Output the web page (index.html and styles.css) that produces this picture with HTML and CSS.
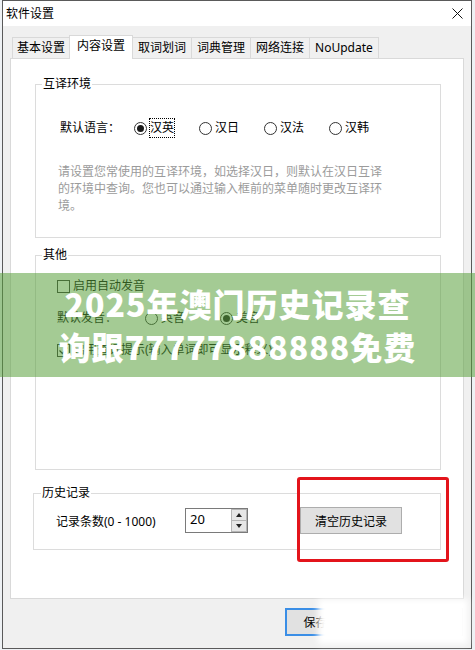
FILE: index.html
```html
<!DOCTYPE html>
<html lang="zh-CN">
  <head>
    <meta charset="UTF-8">
    <meta name="viewport" content="width=device-width, initial-scale=1.0">
    <title>软件设置</title>
    <link rel="stylesheet" href="styles.css">
  </head>
  <body>

    <!-- Dialog window -->
    <div class="window">
      <div class="titlebar">
        <span class="title">软件设置</span>
        <svg class="close" width="11" height="11" viewBox="0 0 11 11">
          <path d="M0.5 0.5 L10.5 10.5 M10.5 0.5 L0.5 10.5" stroke="#111" stroke-width="1" fill="none"/>
        </svg>
      </div>

      <div class="tabs">
        <div class="tab first">基本设置</div>
        <div class="tab active">内容设置</div>
        <div class="tab">取词划词</div>
        <div class="tab">词典管理</div>
        <div class="tab">网络连接</div>
        <div class="tab">NoUpdate</div>
      </div>

      <div class="panel">
        <fieldset class="group group-lang">
          <legend>互译环境</legend>
          <div class="option-row">
            <span class="row-label">默认语言：</span>
            <span class="radio checked"><i></i><span class="focus">汉英</span></span>
            <span class="radio"><i></i><span>汉日</span></span>
            <span class="radio"><i></i><span>汉法</span></span>
            <span class="radio"><i></i><span>汉韩</span></span>
          </div>
          <p class="hint">请设置您常使用的互译环境，如选择汉日，则默认在汉日互译的环境中查询。您也可以通过输入框前的菜单随时更改互译环境。</p>
        </fieldset>

        <fieldset class="group group-other">
          <legend>其他</legend>
          <div class="option-row">
            <span class="checkbox"></span><span>启用自动发音</span>
          </div>
          <div class="option-row">
            <span class="row-label wide">默认发音：</span>
            <span class="radio wide"><i></i><span>英音</span></span>
            <span class="radio wide checked"><i></i><span>美音</span></span>
          </div>
          <div class="option-row">
            <span class="checkbox checked">
              <svg width="11" height="11" viewBox="0 0 11 11"><path d="M1.5 5.5 L4.5 8.5 L9.5 2.5" stroke="#222" stroke-width="1.2" fill="none"/></svg>
            </span><span>启用查词提示(输入单词即可显示释义)</span>
          </div>
        </fieldset>

        <fieldset class="group group-history">
          <legend>历史记录</legend>
          <div class="history-row">
            <span class="history-label">记录条数(0 - 1000)</span>
            <div class="spinner">
              <span class="spin-value">20</span>
              <div class="spin-buttons">
                <span class="spin-up"></span>
                <span class="spin-down"></span>
              </div>
            </div>
            <button class="btn clear-btn">清空历史记录</button>
          </div>
        </fieldset>
      </div>

      <div class="footer">
        <button class="btn default">保存(S)</button>
        <button class="btn">取消(C)</button>
      </div>
    </div>

    <!-- Overlays on top of the screenshot -->
    <div class="banner">2025年澳门历史记录查<br>询跟77777888888免费</div>
    <div class="mark"></div>
    <div class="fog"></div>

  </body>
</html>
```

FILE: styles.css
```css
* {
  box-sizing: border-box;
}
body {
  margin: 0;
  width: 475px;
  height: 650px;
  overflow: hidden;
  position: relative;
  background-color: #eef1f4;
  font-family: 'Noto Sans', 'Noto Sans CJK SC', sans-serif;
  font-size: 12px;
  color: #000;
}
.window {
  margin-left: 2px;
  width: 470px;
  height: 649px;
  border: 1px solid #5a5a5a;
  background-color: #f0f0f0;
  display: flex;
  flex-direction: column;
}
.titlebar {
  height: 25px;
  flex: none;
  background-color: #fff;
  display: flex;
  align-items: center;
  justify-content: space-between;
  padding: 0 8px 0 3px;
}
.title {
  line-height: 16px;
}

/* Tabs */
.tabs {
  height: 23px;
  flex: none;
  margin-top: 9px;
  padding-left: 9px;
  display: flex;
  align-items: flex-end;
}
.tab {
  height: 21px;
  padding: 0 5px;
  margin-left: -1px;
  border: 1px solid #d9d9d9;
  border-bottom: none;
  background-color: #f0f0f0;
  line-height: 19px;
  white-space: nowrap;
}
.tab.first {
  margin-left: 0;
  padding: 0 4px;
}
.tab.active {
  height: 24px;
  margin-bottom: -1px;
  padding: 0 7px;
  line-height: 20px;
  background-color: #fff;
  position: relative;
  z-index: 1;
}

/* Tab page */
.panel {
  height: 541px;
  flex: none;
  margin: 0 7px;
  background-color: #fff;
  border: 1px solid #d9d9d9;
  display: flex;
  flex-direction: column;
}
.group {
  margin: 0 22px 0 24px;
  padding: 0;
  min-width: 0;
  border: 1px solid #dcdcdc;
}
.group legend {
  margin-left: 6px;
  padding: 0 1px;
  line-height: 16px;
}
.group-lang {
  margin-top: 17px;
  height: 162px;
  padding-top: 26px;
}
.group-lang .option-row {
  margin-left: 24px;
}
.group-other {
  margin-top: 9px;
  height: 223px;
  padding-top: 13px;
  display: flex;
  flex-direction: column;
  gap: 12px;
}
.group-other .option-row {
  margin-left: 21px;
}
.group-history {
  margin: 15px 22px 0 22px;
  height: 65px;
  padding-top: 6px;
}
.group-history legend {
  margin-left: 7px;
}
.option-row {
  height: 20px;
  display: flex;
  align-items: center;
  line-height: 18px;
  white-space: nowrap;
}
.row-label {
  width: 74px;
  flex: none;
}
.row-label.wide {
  width: 88px;
}
.radio {
  width: 65px;
  flex: none;
  display: flex;
  align-items: center;
}
.radio.wide {
  width: 75px;
}
.radio i {
  width: 13px;
  height: 13px;
  margin-right: 3px;
  border: 1px solid #333;
  border-radius: 50%;
  background-color: #fff;
  display: flex;
  align-items: center;
  justify-content: center;
}
.radio.checked i::after {
  content: '';
  width: 7px;
  height: 7px;
  border-radius: 50%;
  background-color: #1a1a1a;
}
.radio .focus {
  margin-left: -1px;
  border: 1px dotted #000;
  line-height: 18px;
}
.checkbox {
  width: 13px;
  height: 13px;
  margin-right: 3px;
  border: 1px solid #333;
  background-color: #fff;
  display: flex;
  align-items: center;
  justify-content: center;
}
.hint {
  width: 328px;
  margin: 25px 0 0 22px;
  line-height: 17px;
  color: #9b9b9b;
}

/* History row */
.history-row {
  height: 27px;
  margin-left: 22px;
  display: flex;
  align-items: center;
}
.history-label {
  width: 129px;
  flex: none;
}
.spinner {
  width: 63px;
  height: 25px;
  display: flex;
  border: 1px solid #7a7a7a;
  background-color: #fff;
}
.spin-value {
  flex: 1;
  padding: 2px 0 0 4px;
  line-height: 17px;
  font-size: 13px;
}
.spin-buttons {
  width: 16px;
  display: flex;
  flex-direction: column;
}
.spin-up, .spin-down {
  flex: 1;
  background-color: #e6e6e6;
  border: 1px solid #b5b5b5;
  display: flex;
  align-items: center;
  justify-content: center;
}
.spin-down {
  border-top: none;
}
.spin-up::after {
  content: '';
  border-left: 3px solid transparent;
  border-right: 3px solid transparent;
  border-bottom: 4px solid #222;
}
.spin-down::after {
  content: '';
  border-left: 3px solid transparent;
  border-right: 3px solid transparent;
  border-top: 4px solid #222;
}
.btn {
  font-family: 'Noto Sans', 'Noto Sans CJK SC', sans-serif;
  font-size: 12px;
  color: #000;
  background-color: #e1e1e1;
  border: 1px solid #adadad;
  padding: 0;
}
.clear-btn {
  width: 102px;
  height: 27px;
  margin-left: 52px;
}

/* Dialog buttons */
.footer {
  flex: 1;
  display: flex;
  justify-content: flex-end;
  gap: 28px;
  padding: 9px 8px 0 0;
}
.footer .btn {
  width: 75px;
  height: 28px;
}
.footer .btn.default {
  border: 2px solid #3a8ee6;
}

/* Overlays */
.banner {
  position: absolute;
  left: 0;
  top: 273px;
  width: 475px;
  height: 104px;
  padding-top: 9px;
  background-color: rgba(90, 160, 60, 0.55);
  color: #fff;
  font-family: 'Noto Sans CJK SC', sans-serif;
  font-weight: 900;
  font-size: 32px;
  letter-spacing: 1px;
  line-height: 43px;
  text-align: center;
}
.mark {
  position: absolute;
  left: 297px;
  top: 477px;
  width: 152px;
  height: 85px;
  border: 3px solid #e3141b;
  border-radius: 3px;
}
.fog {
  position: absolute;
  left: 318px;
  top: 599px;
  width: 150px;
  height: 45px;
  background-color: #fff;
  filter: blur(3px);
}
```
